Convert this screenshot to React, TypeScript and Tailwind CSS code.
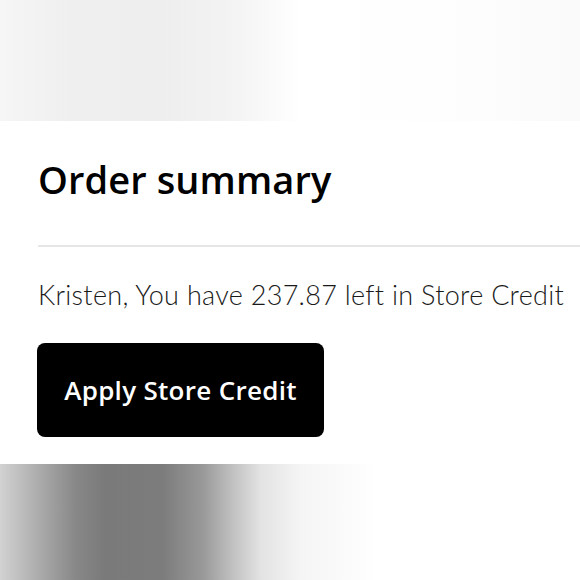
export default function App() {
  return (
    <div className="flex h-[580px] w-[580px] flex-col overflow-hidden bg-white" style={{ fontFamily: "Lato, 'Noto Sans', sans-serif" }}>
      <div className="h-[121px] bg-[linear-gradient(to_right,#f6f6f6_0%,#efefef_12%,#eeeeee_28%,#f3f3f3_40%,#ffffff_52%,#fefefe_75%,#fafafa_100%)]" />
      <section className="h-[343px] bg-white pl-[38px]">
        <h2 className="pt-[34px] font-['Open_Sans',sans-serif] text-[38px] font-semibold leading-[48px] tracking-[0.1px] text-black">Order summary</h2>
        <div className="mt-[42px] h-[2px] bg-[#e6e6e6]" />
        <p className="mt-[30px] text-[27px] font-light leading-[36px] tracking-[0.3px] text-[#1a1a1a]">Kristen, You have 237.87 left in Store Credit</p>
        <button className="mt-[30px] -ml-px h-[94px] w-[287px] rounded-[8px] bg-black font-['Open_Sans',sans-serif] text-[26px] font-semibold tracking-[0.3px] text-white">Apply Store Credit</button>
      </section>
      <div className="flex-1 bg-[linear-gradient(to_right,#d2d2d2_0%,#aaaaaa_7%,#888888_13%,#7a7a7a_18%,#7c7c7c_28%,#999999_35%,#c0c0c0_40%,#e3e3e3_45%,#f5f5f5_52%,#ffffff_65%)]" />
    </div>
  );
}
